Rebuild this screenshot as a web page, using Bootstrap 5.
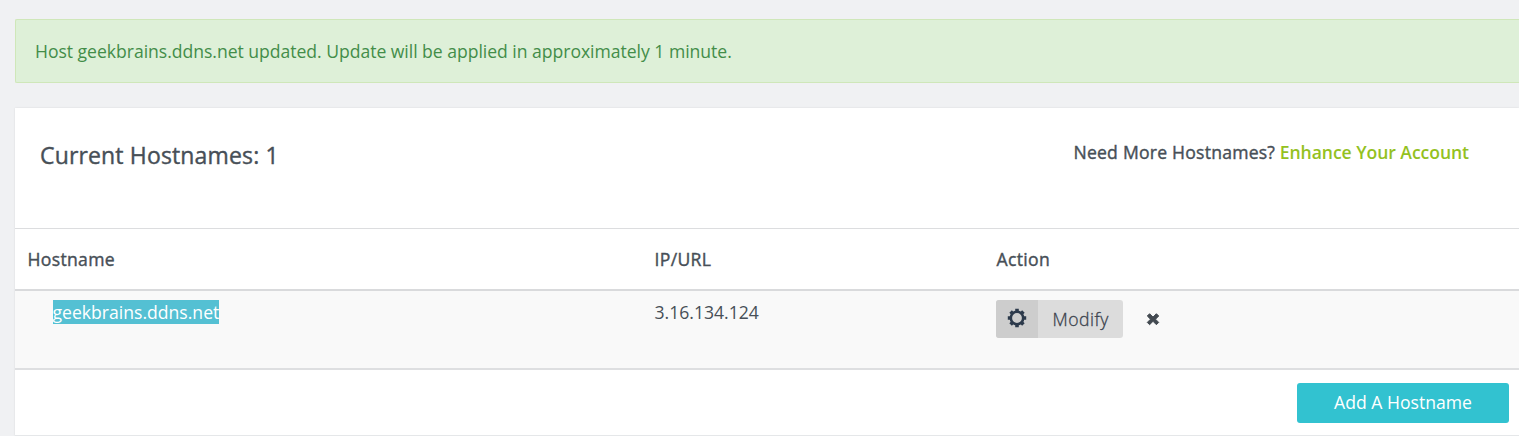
<!DOCTYPE html>
<html lang="en">
<head>
<meta charset="utf-8">
<meta name="viewport" content="width=device-width, initial-scale=1">
<title>Hostnames</title>
<link href="https://cdn.jsdelivr.net/npm/bootstrap@5.3.0/dist/css/bootstrap.min.css" rel="stylesheet">
<style>
body{background:#f0f1f3;color:#474f57;font-family:"Open Sans","Noto Sans",sans-serif;font-size:18px;line-height:24px;overflow:hidden}
.page-wrap{padding:19px 0 0 15px}
.notice{height:64px;padding:0 19px;background:#def0d8;border:1px solid #cfe7b9;border-right:0;border-radius:2px 0 0 2px;color:#438d49;font-size:17.6px;letter-spacing:-.035px;margin-bottom:25px}
.panel{background:#fff;height:328px;border-bottom:1px solid #e5e7e9;box-shadow:0 0 2px rgba(0,0,0,.1)}
.panel-top{height:120px;padding:31px 50px 0 25px}
.panel-top h1{font-size:23px;line-height:32px;font-weight:500;letter-spacing:.15px}
.panel-top h1,.more-label,.hosts th{-webkit-text-stroke:.4px currentColor}
.more{font-size:17.6px;padding-top:1px}
.more-label{letter-spacing:.22px}
.more a{color:#94c11f;font-weight:600;letter-spacing:-.07px}
.hosts{table-layout:fixed;--bs-table-bg:transparent;color:#474f57;border-color:#dcdddf}
.hosts th{height:61px;border-top:1px solid #dcdddf;border-bottom:2px solid #d9dadc;padding:0 12.5px;font-weight:500;font-size:17.6px;letter-spacing:.32px}
.hosts td{height:79px;padding:9px 12.5px 0;background:#f9f9f9;border-bottom:2px solid #dedfe1;font-size:17.6px;vertical-align:top}
.hosts .actions{padding-left:12px}
.host-name{background:#54c0d3;color:#fff;padding:0;display:inline-block;height:24px;line-height:24px;margin-left:25px}
.btn-modify{height:38px;border-radius:3px;background:#dcdcdc;color:#3a424d;overflow:hidden;border:0;padding:0;font-size:17.6px;margin-left:-.5px}
.btn-modify .gear{width:42px;height:38px;background:#cdcdcd;color:#2c3a4b;padding-bottom:1px}
.btn-modify .word{padding:1px 0 0 15px;font-weight:300;-webkit-text-stroke:.3px currentColor;width:85px;text-align:left;white-space:nowrap;letter-spacing:.5px}
.cross{margin-left:22px}
.btn-add{width:212px;height:40px;background:#32c2d0;color:#fff;border:0;border-radius:3px;font-size:17.6px;padding:0}
.panel-foot{padding:13px 10px 0 0}
</style>
</head>
<body>
<main class="page-wrap">
  <div class="notice d-flex align-items-center" role="alert"><span>Host geekbrains.ddns.net updated. Update will be applied in approximately 1 minute.</span></div>
  <section class="panel">
    <header class="panel-top d-flex justify-content-between align-items-start">
      <h1 class="mb-0">Current Hostnames: 1</h1>
      <div class="more"><span class="more-label">Need More Hostnames?</span> <a href="#" class="text-decoration-none">Enhance Your Account</a></div>
    </header>
    <table class="table hosts mb-0">
      <colgroup><col style="width:627px"><col style="width:342px"><col></colgroup>
      <thead><tr><th class="align-middle">Hostname</th><th class="align-middle">IP/URL</th><th class="align-middle">Action</th></tr></thead>
      <tbody><tr>
        <td><mark class="host-name">geekbrains.ddns.net</mark></td>
        <td>3.16.134.124</td>
        <td class="actions">
          <div class="d-flex align-items-center">
            <button class="btn btn-modify d-flex align-items-center">
              <span class="gear d-flex align-items-center justify-content-center"><svg width="20" height="20" viewBox="-10 -10 20 20"><g fill="none" stroke="currentColor"><circle r="6.2" stroke-width="2.6"/><path stroke-width="3.6" d="M0-6.5V-9.2M0 6.5V9.2M-6.5 0H-9.2M6.5 0H9.2M-4.7-4.7-6.4-6.4M4.7-4.7 6.4-6.4M-4.7 4.7-6.4 6.4M4.7 4.7 6.4 6.4"/></g></svg></span>
              <span class="word">Modify</span>
            </button>
            <svg class="cross" width="16" height="16" viewBox="0 0 16 16"><path d="M4.6 2.7 8 6.1 11.4 2.7 13.7 5 10.5 8.2 13.7 11.4 11.4 13.7 8 10.3 4.6 13.7 2.3 11.4 5.5 8.2 2.3 5Z" fill="#434a51" stroke="#434a51" stroke-width="1" stroke-linejoin="round"/></svg>
          </div>
        </td>
      </tr></tbody>
    </table>
    <footer class="panel-foot d-flex justify-content-end"><button class="btn btn-add">Add A Hostname</button></footer>
  </section>
</main>
<script src="https://cdn.jsdelivr.net/npm/bootstrap@5.3.0/dist/js/bootstrap.bundle.min.js"></script>
</body>
</html>
